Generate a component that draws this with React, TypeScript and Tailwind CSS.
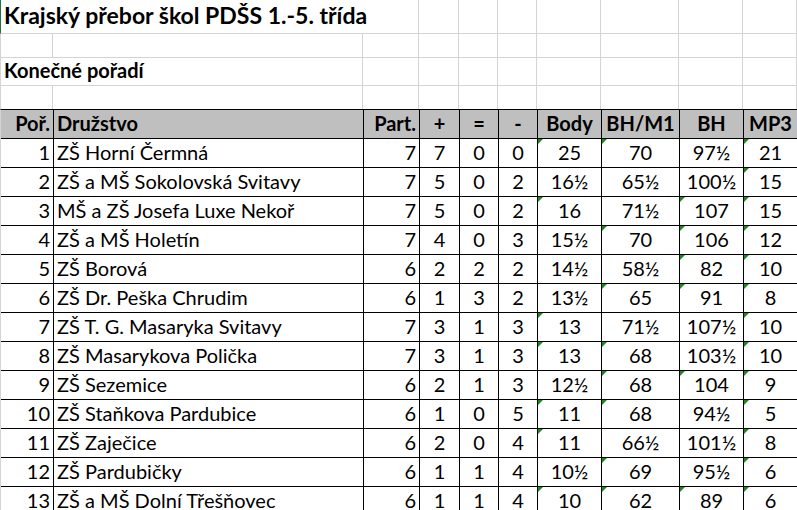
import React from "react";

const COLS = "grid-cols-[53px_310px_56px_40px_39px_39px_64px_78px_64px_54px]";

type Row = [number, string, number, number, number, number, string, string, string, string];

const rows: Row[] = [
  [1, "ZŠ Horní Čermná", 7, 7, 0, 0, "25", "70", "97½", "21"],
  [2, "ZŠ a MŠ Sokolovská Svitavy", 7, 5, 0, 2, "16½", "65½", "100½", "15"],
  [3, "MŠ a ZŠ Josefa Luxe Nekoř", 7, 5, 0, 2, "16", "71½", "107", "15"],
  [4, "ZŠ a MŠ Holetín", 7, 4, 0, 3, "15½", "70", "106", "12"],
  [5, "ZŠ Borová", 6, 2, 2, 2, "14½", "58½", "82", "10"],
  [6, "ZŠ Dr. Peška Chrudim", 6, 1, 3, 2, "13½", "65", "91", "8"],
  [7, "ZŠ T. G. Masaryka Svitavy", 7, 3, 1, 3, "13", "71½", "107½", "10"],
  [8, "ZŠ Masarykova Polička", 7, 3, 1, 3, "13", "68", "103½", "10"],
  [9, "ZŠ Sezemice", 6, 2, 1, 3, "12½", "68", "104", "9"],
  [10, "ZŠ Staňkova Pardubice", 6, 1, 0, 5, "11", "68", "94½", "5"],
  [11, "ZŠ Zaječice", 6, 2, 0, 4, "11", "66½", "101½", "8"],
  [12, "ZŠ Pardubičky", 6, 1, 1, 4, "10½", "69", "95½", "6"],
  [13, "ZŠ a MŠ Dolní Třešňovec", 6, 1, 1, 4, "10", "62", "89", "6"],
];

function Tri() {
  return (
    <span className="absolute left-0 top-0 w-0 h-0 border-t-[5px] border-t-[#1e8a1e] border-r-[5px] border-r-transparent" />
  );
}

function Cell({
  children,
  align = "center",
  tri = false,
}: {
  children: React.ReactNode;
  align?: "left" | "right" | "center";
  tri?: boolean;
}) {
  const a =
    align === "left" ? "justify-start pl-[3px]" : align === "right" ? "justify-end pr-[3px]" : "justify-center";
  return (
    <div className={`relative flex items-end ${a} border-r border-b border-black pb-[3px] leading-[24px] whitespace-nowrap`}>
      {tri && <Tri />}
      {children}
    </div>
  );
}

function GrayCells({ n }: { n: number }) {
  return (
    <>
      {Array.from({ length: n }).map((_, i) => (
        <div key={i} className="border-r border-b border-[#d4d4d4]" />
      ))}
    </>
  );
}

const isInt = (s: string) => /^\d+$/.test(s);

export default function App() {
  return (
    <div
      className="w-[797px] h-[510px] overflow-hidden bg-white text-black"
      style={{ fontFamily: "Lato, 'Open Sans', sans-serif" }}
    >
      {/* Row 1: title */}
      <div className={`grid ${COLS} h-[34px]`}>
        <div className="col-span-3 border-l border-l-[#217346] border-b border-b-[#d4d4d4] border-r border-r-[#d4d4d4] flex items-end pl-[3px] pb-[4px]">
          <span className="text-[23px] font-bold leading-[28px] whitespace-nowrap">
            Krajský přebor škol PDŠS 1.-5. třída
          </span>
        </div>
        <GrayCells n={7} />
      </div>
      {/* Row 2 */}
      <div className={`grid ${COLS} h-[24px]`}>
        <div className="border-l border-l-[#d4d4d4] border-r border-b border-[#d4d4d4]" />
        <GrayCells n={9} />
      </div>
      {/* Row 3 */}
      <div className={`grid ${COLS} h-[28px]`}>
        <div className="col-span-2 border-l border-l-[#d4d4d4] border-r border-b border-[#d4d4d4] flex items-end pl-[3px] pb-[3px]">
          <span className="text-[20px] font-bold leading-[24px] whitespace-nowrap">Konečné pořadí</span>
        </div>
        <GrayCells n={8} />
      </div>
      {/* Row 4 */}
      <div className={`grid ${COLS} h-[23px]`}>
        <div className="border-l border-l-[#d4d4d4] border-r border-[#d4d4d4]" />
        <div className="border-r border-[#d4d4d4]" />
        <div className="border-r border-[#d4d4d4]" />
        <div className="border-r border-[#d4d4d4]" />
        <div className="border-r border-[#d4d4d4]" />
        <div className="border-r border-[#d4d4d4]" />
        <div className="border-r border-[#d4d4d4]" />
        <div className="border-r border-[#d4d4d4]" />
        <div className="border-r border-[#d4d4d4]" />
        <div className="border-r border-[#d4d4d4]" />
      </div>
      {/* Header */}
      <div className={`grid ${COLS} h-[30px] border-t border-black bg-[#bfbfbf] font-bold text-[20px] border-l border-l-[#d4d4d4]`}>
        <Cell align="right">Poř.</Cell>
        <Cell align="left">Družstvo</Cell>
        <Cell align="right">Part.</Cell>
        <Cell>+</Cell>
        <Cell>=</Cell>
        <Cell>-</Cell>
        <Cell>Body</Cell>
        <Cell>BH/M1</Cell>
        <Cell>BH</Cell>
        <Cell>MP3</Cell>
      </div>
      {rows.map((r) => (
        <div key={r[0]} className={`grid ${COLS} h-[29px] text-[20px] border-l border-l-[#d4d4d4]`}>
          <Cell align="right">{r[0]}</Cell>
          <Cell align="left">{r[1]}</Cell>
          <Cell align="right">{r[2]}</Cell>
          <Cell>{r[3]}</Cell>
          <Cell>{r[4]}</Cell>
          <Cell>{r[5]}</Cell>
          <Cell tri={isInt(r[6])}>{r[6]}</Cell>
          <Cell tri={isInt(r[7])}>{r[7]}</Cell>
          <Cell tri={isInt(r[8])}>{r[8]}</Cell>
          <Cell tri={isInt(r[9])}>{r[9]}</Cell>
        </div>
      ))}
    </div>
  );
}
